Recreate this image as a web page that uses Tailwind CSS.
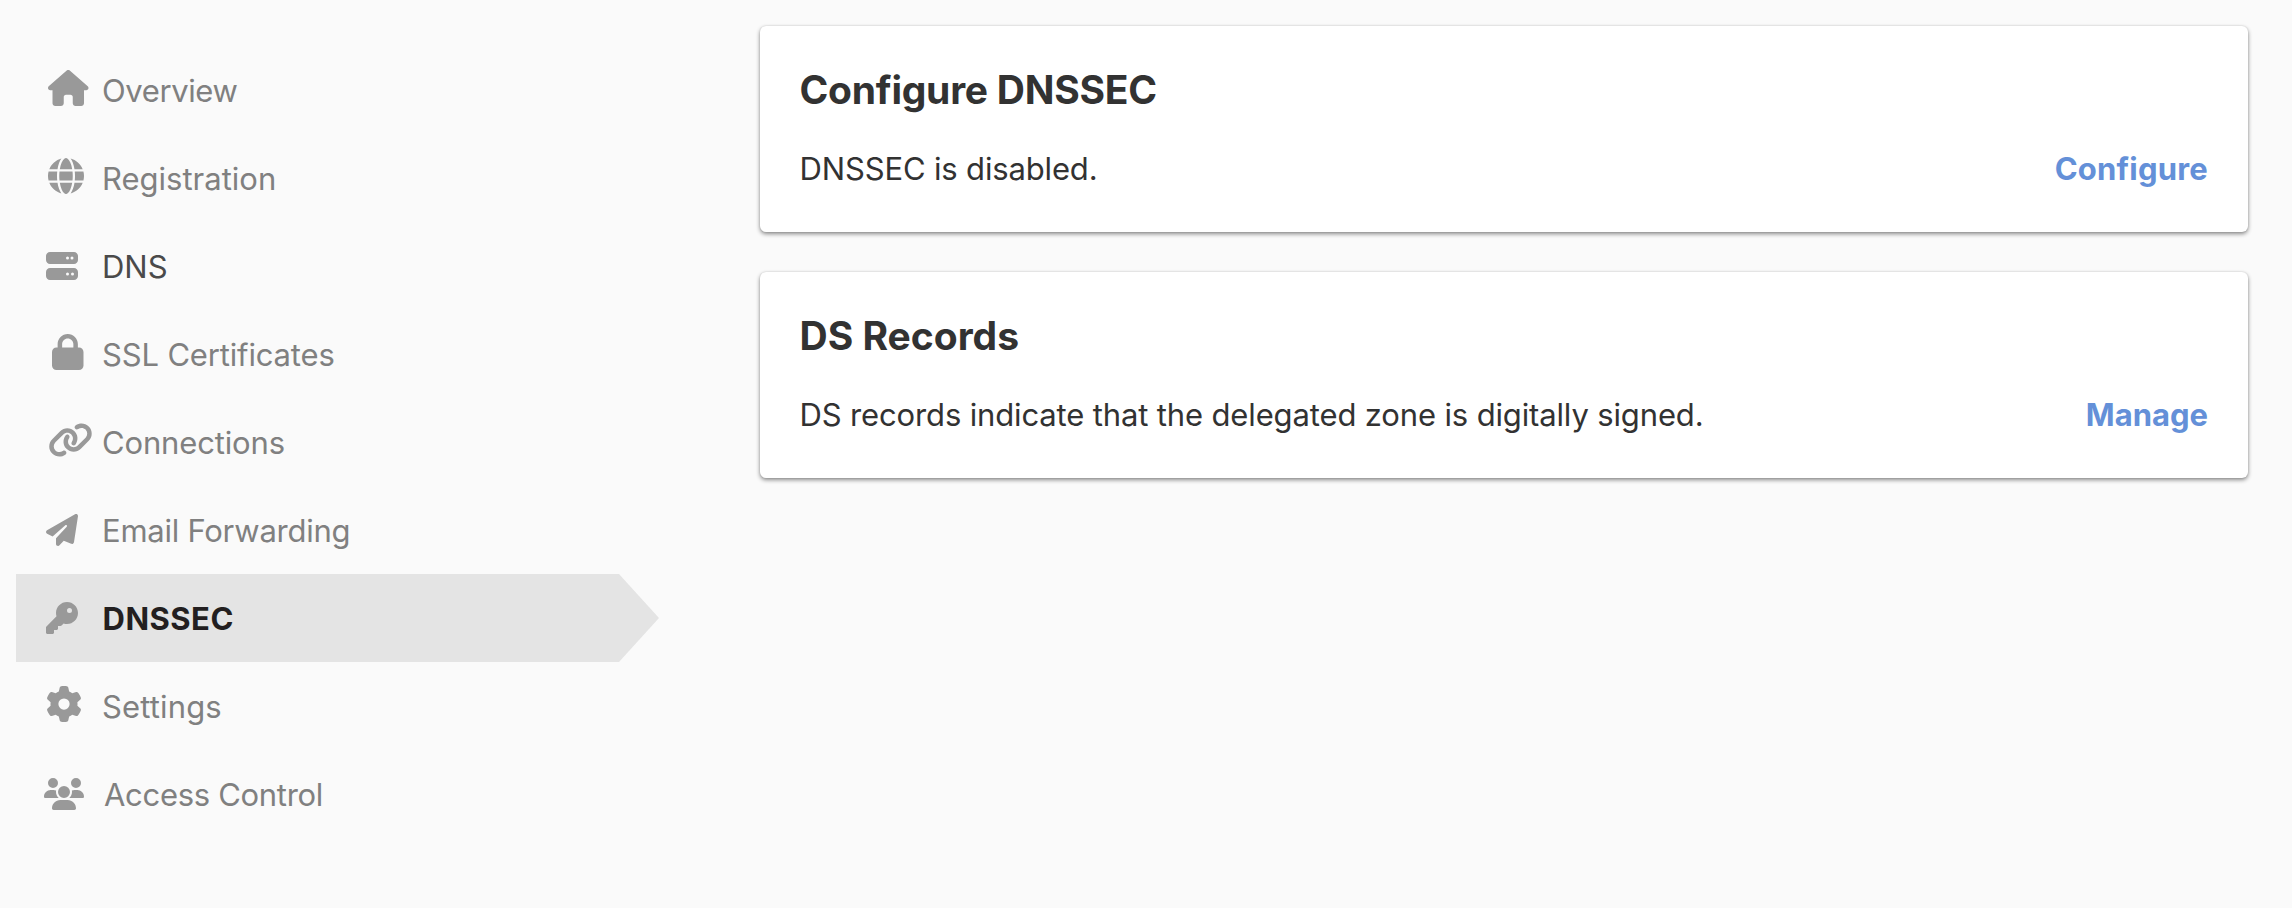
<!DOCTYPE html>
<html lang="en">
<head>
<meta charset="utf-8">
<title>DNSSEC</title>
<script src="https://cdn.jsdelivr.net/npm/@tailwindcss/browser@4"></script>
</head>
<body class="min-h-screen bg-[#fafafa] font-[Inter,sans-serif] antialiased">
<div class="flex">
  <nav class="ml-4 mt-[46px] flex w-[644px] shrink-0 flex-col text-[31px] text-[#808080]">
    <a class="flex h-[88px] items-center">
      <span class="w-[86px] shrink-0 pl-8"><svg class="mb-1 block h-9 w-[40.5px] fill-[#999999]" viewBox="0 0 576 512"><path d="M575.8 255.5c0 18-15 32.1-32 32.1h-32l.7 160.2c0 2.7-.2 5.4-.5 8.1V472c0 22.1-17.9 40-40 40H456c-1.1 0-2.2 0-3.3-.1c-1.4 .1-2.8 .1-4.2 .1H416 392c-22.1 0-40-17.9-40-40V448 384c0-17.7-14.3-32-32-32H256c-17.7 0-32 14.3-32 32v64 24c0 22.1-17.9 40-40 40H160 128.1c-1.5 0-3-.1-4.5-.2c-1.2 .1-2.4 .2-3.6 .2H104c-22.1 0-40-17.9-40-40V360c0-.9 0-1.9 .1-2.8V287.6H32c-18 0-32-14-32-32.1c0-9 3-17 10-24L266.4 8c7-7 15-8 22-8s15 2 21 7L564.8 231.5c8 7 12 15 11 24z"/></svg></span>
      <span class="pt-0.5 tracking-[-0.4px]">Overview</span>
    </a>
    <a class="flex h-[88px] items-center">
      <span class="w-[86px] shrink-0 pl-8"><svg class="mb-1 block size-9 fill-[#999999]" viewBox="0 0 512 512"><path d="M352 256c0 22.2-1.2 43.6-3.3 64H163.3c-2.2-20.4-3.3-41.8-3.3-64s1.2-43.6 3.3-64H348.7c2.2 20.4 3.3 41.8 3.3 64zm28.8-64H503.9c5.3 20.5 8.1 41.9 8.1 64s-2.8 43.5-8.1 64H380.8c2.1-20.6 3.2-42 3.2-64s-1.1-43.4-3.2-64zm112.6-32H376.7c-10-63.9-29.8-117.4-55.3-151.6c78.3 20.7 142 77.5 171.9 151.6zm-149.1 0H167.7c6.1-36.4 15.5-68.6 27-94.7c10.5-23.6 22.2-40.7 33.5-51.5C239.4 3.2 248.7 0 256 0s16.6 3.2 27.8 13.8c11.3 10.8 23 27.9 33.5 51.5c11.6 26 20.9 58.2 27 94.7zm-209 0H18.6C48.6 85.9 112.2 29.1 190.6 8.4C165.1 42.6 145.3 96.1 135.3 160zM8.1 192H131.2c-2.1 20.6-3.2 42-3.2 64s1.1 43.4 3.2 64H8.1C2.8 299.5 0 278.1 0 256s2.8-43.5 8.1-64zM194.7 446.6c-11.6-26-20.9-58.2-27-94.6H344.3c-6.1 36.4-15.5 68.6-27 94.6c-10.5 23.6-22.2 40.7-33.5 51.5C272.6 508.8 263.3 512 256 512s-16.6-3.2-27.8-13.8c-11.3-10.8-23-27.9-33.5-51.5zM135.3 352c10 63.9 29.8 117.4 55.3 151.6C112.2 482.9 48.6 426.1 18.6 352H135.3zm358.1 0c-30 74.1-93.6 130.9-171.9 151.6c25.5-34.2 45.2-87.7 55.3-151.6H493.4z"/></svg></span>
      <span class="pt-0.5">Registration</span>
    </a>
    <a class="flex h-[88px] items-center text-[#4a4a4a]">
      <span class="w-[86px] shrink-0 pl-[30px]"><svg class="block size-8 fill-[#999999]" viewBox="0 0 512 512"><path d="M64 32C28.7 32 0 60.7 0 96v64c0 35.3 28.7 64 64 64H448c35.3 0 64-28.7 64-64V96c0-35.3-28.7-64-64-64H64zm280 72a24 24 0 1 1 0 48 24 24 0 1 1 0-48zm48 24a24 24 0 1 1 48 0 24 24 0 1 1 -48 0zM64 288c-35.3 0-64 28.7-64 64v64c0 35.3 28.7 64 64 64H448c35.3 0 64-28.7 64-64V352c0-35.3-28.7-64-64-64H64zm280 72a24 24 0 1 1 0 48 24 24 0 1 1 0-48zm56 24a24 24 0 1 1 48 0 24 24 0 1 1 -48 0z"/></svg></span>
      <span class="pt-0.5">DNS</span>
    </a>
    <a class="flex h-[88px] items-center">
      <span class="w-[86px] shrink-0 pl-9"><svg class="mb-1 block h-9 w-[31.5px] fill-[#999999]" viewBox="0 0 448 512"><path d="M144 144v48H304V144c0-44.2-35.8-80-80-80s-80 35.8-80 80zM80 192V144C80 64.5 144.5 0 224 0s144 64.5 144 144v48h16c35.3 0 64 28.7 64 64V448c0 35.3-28.7 64-64 64H64c-35.3 0-64-28.7-64-64V256c0-35.3 28.7-64 64-64H80z"/></svg></span>
      <span class="pt-0.5 tracking-[-0.16px]">SSL Certificates</span>
    </a>
    <a class="flex h-[88px] items-center">
      <span class="w-[86px] shrink-0 pl-8"><svg class="mb-1 block h-9 w-[45px] fill-[#999999]" viewBox="0 0 640 512"><path d="M579.8 267.7c56.5-56.5 56.5-148 0-204.5c-50-50-128.8-56.5-186.3-15.4l-1.6 1.1c-14.4 10.3-17.7 30.3-7.4 44.6s30.3 17.7 44.6 7.4l1.6-1.1c32.1-22.9 76-19.3 103.8 8.6c31.5 31.5 31.5 82.5 0 114L422.3 334.8c-31.5 31.5-82.5 31.5-114 0c-27.9-27.9-31.5-71.8-8.6-103.8l1.1-1.6c10.3-14.4 6.9-34.4-7.4-44.6s-34.4-6.9-44.6 7.4l-1.1 1.6C206.5 251.2 213 330 263 380c56.5 56.5 148 56.5 204.5 0L579.8 267.7zM60.2 244.3c-56.5 56.5-56.5 148 0 204.5c50 50 128.8 56.5 186.3 15.4l1.6-1.1c14.4-10.3 17.7-30.3 7.4-44.6s-30.3-17.7-44.6-7.4l-1.6 1.1c-32.1 22.9-76 19.3-103.8-8.6C74 372 74 321 105.5 289.5L217.7 177.2c31.5-31.5 82.5-31.5 114 0c27.9 27.9 31.5 71.8 8.6 103.9l-1.1 1.6c-10.3 14.4-6.9 34.4 7.4 44.6s34.4 6.9 44.6-7.4l1.1-1.6C433.5 260.8 427 182 377 132c-56.5-56.5-148-56.5-204.5 0L60.2 244.3z"/></svg></span>
      <span class="pt-0.5 tracking-[-0.15px]">Connections</span>
    </a>
    <a class="flex h-[88px] items-center">
      <span class="w-[86px] shrink-0 pl-[30px]"><svg class="block size-8 fill-[#999999]" viewBox="0 0 512 512"><path d="M498.1 5.6c10.1 7 15.4 19.1 13.5 31.2l-64 416c-1.5 9.7-7.4 18.2-16 23s-18.9 5.4-28 1.6L284 427.7l-68.5 74.1c-8.9 9.7-22.9 12.9-35.2 8.1S160 493.2 160 480V396.4c0-4 1.5-7.8 4.2-10.7L331.8 202.8c5.8-6.3 5.6-16-.4-22s-15.7-6.4-22-.7L106 360.8 17.7 316.6C7.1 311.3 .3 300.7 0 288.9s5.9-22.8 16.1-28.7l448-256c10.7-6.1 23.9-5.5 34 1.4z"/></svg></span>
      <span class="pt-0.5 tracking-[-0.25px]">Email Forwarding</span>
    </a>
    <a class="flex h-[88px] items-center bg-[#e4e4e4] font-bold text-[#231f20] [clip-path:polygon(0_0,603px_0,643px_50%,603px_100%,0_100%)]">
      <span class="w-[86px] shrink-0 pl-[30px]"><svg class="block size-8 fill-[#999999]" viewBox="0 0 512 512"><path d="M336 352c97.2 0 176-78.8 176-176S433.2 0 336 0S160 78.8 160 176c0 18.7 2.9 36.8 8.3 53.7L7 391c-4.5 4.5-7 10.6-7 17v80c0 13.3 10.7 24 24 24h80c13.3 0 24-10.7 24-24V448h40c13.3 0 24-10.7 24-24V384h40c6.4 0 12.5-2.5 17-7l33.3-33.3c16.9 5.4 35 8.3 53.7 8.3zM376 96a40 40 0 1 1 0 80 40 40 0 1 1 0-80z"/></svg></span>
      <span class="pt-0.5 pl-[0.5px] tracking-[0.5px]">DNSSEC</span>
    </a>
    <a class="flex h-[88px] items-center">
      <span class="w-[86px] shrink-0 pl-[30px]"><svg class="mb-1 block size-9 fill-[#999999]" viewBox="0 0 512 512"><path d="M495.9 166.6c3.2 8.7 .5 18.4-6.4 24.6l-43.3 39.4c1.1 8.3 1.7 16.8 1.7 25.4s-.6 17.1-1.7 25.4l43.3 39.4c6.9 6.2 9.6 15.9 6.4 24.6c-4.4 11.9-9.7 23.3-15.8 34.3l-4.7 8.1c-6.6 11-14 21.4-22.1 31.2c-5.9 7.2-15.7 9.6-24.5 6.8l-55.7-17.7c-13.4 10.3-28.2 18.9-44 25.4l-12.5 57.1c-2 9.1-9 16.3-18.2 17.8c-13.8 2.3-28 3.5-42.5 3.5s-28.7-1.2-42.5-3.5c-9.2-1.5-16.2-8.7-18.2-17.8l-12.5-57.1c-15.8-6.5-30.6-15.1-44-25.4L83.1 425.9c-8.8 2.8-18.6 .3-24.5-6.8c-8.1-9.8-15.5-20.2-22.1-31.2l-4.7-8.1c-6.1-11-11.4-22.4-15.8-34.3c-3.2-8.7-.5-18.4 6.4-24.6l43.3-39.4C64.6 273.1 64 264.6 64 256s.6-17.1 1.7-25.4L22.4 191.2c-6.9-6.2-9.6-15.9-6.4-24.6c4.4-11.9 9.7-23.3 15.8-34.3l4.7-8.1c6.6-11 14-21.4 22.1-31.2c5.9-7.2 15.7-9.6 24.5-6.8l55.7 17.7c13.4-10.3 28.2-18.9 44-25.4l12.5-57.1c2-9.1 9-16.3 18.2-17.8C227.3 1.2 241.5 0 256 0s28.7 1.2 42.5 3.5c9.2 1.5 16.2 8.7 18.2 17.8l12.5 57.1c15.8 6.5 30.6 15.1 44 25.4l55.7-17.7c8.8-2.8 18.6-.3 24.5 6.8c8.1 9.8 15.5 20.2 22.1 31.2l4.7 8.1c6.1 11 11.4 22.4 15.8 34.3zM256 336a80 80 0 1 0 0-160 80 80 0 1 0 0 160z"/></svg></span>
      <span class="pt-0.5 tracking-[0.15px]">Settings</span>
    </a>
    <a class="flex h-[88px] items-center">
      <span class="w-[88px] shrink-0 pl-7"><svg class="block h-8 w-10 fill-[#999999]" viewBox="0 0 640 512"><path d="M144 0a80 80 0 1 1 0 160A80 80 0 1 1 144 0zM512 0a80 80 0 1 1 0 160A80 80 0 1 1 512 0zM0 298.7C0 239.8 47.8 192 106.7 192h42.7c15.9 0 31 3.5 44.6 9.7c-1.3 7.2-1.9 14.7-1.9 22.3c0 38.2 16.8 72.5 43.3 96c-.2 0-.4 0-.7 0H21.3C9.6 320 0 310.4 0 298.7zM405.3 320c-.2 0-.4 0-.7 0c26.6-23.5 43.3-57.8 43.3-96c0-7.6-.7-15-1.9-22.3c13.6-6.3 28.7-9.7 44.6-9.7h42.7C592.2 192 640 239.8 640 298.7c0 11.8-9.6 21.3-21.3 21.3H405.3zM224 224a96 96 0 1 1 192 0 96 96 0 1 1 -192 0zM128 485.3C128 411.7 187.7 352 261.3 352H378.7C452.3 352 512 411.7 512 485.3c0 14.7-11.9 26.7-26.7 26.7H154.7c-14.7 0-26.7-11.9-26.7-26.7z"/></svg></span>
      <span class="pt-0.5 tracking-[-0.3px]">Access Control</span>
    </a>
  </nav>

  <main class="ml-[100px] mt-[26px] mr-11 flex flex-1 flex-col gap-10 text-[#323232]">
    <section class="h-[206px] rounded-md bg-white pl-[39.5px] pr-10 pt-10 shadow-[0_2px_4px_rgba(0,0,0,0.45),0_0_2px_rgba(0,0,0,0.12)]">
      <h2 class="text-[39px] leading-[47px] font-bold tracking-[-0.25px]">Configure DNSSEC</h2>
      <div class="mt-9 flex justify-between text-[31px] leading-10">
        <p class="tracking-[-0.15px]">DNSSEC is disabled.</p>
        <a class="font-bold tracking-[0.2px] text-[#6490d8]">Configure</a>
      </div>
    </section>
    <section class="h-[206px] rounded-md bg-white pl-[39.5px] pr-10 pt-10 shadow-[0_2px_4px_rgba(0,0,0,0.45),0_0_2px_rgba(0,0,0,0.12)]">
      <h2 class="text-[39px] leading-[47px] font-bold">DS Records</h2>
      <div class="mt-9 flex justify-between text-[31px] leading-10">
        <p class="tracking-[-0.14px]">DS records indicate that the delegated zone is digitally signed.</p>
        <a class="font-bold text-[#6490d8]">Manage</a>
      </div>
    </section>
  </main>
</div>
</body>
</html>
